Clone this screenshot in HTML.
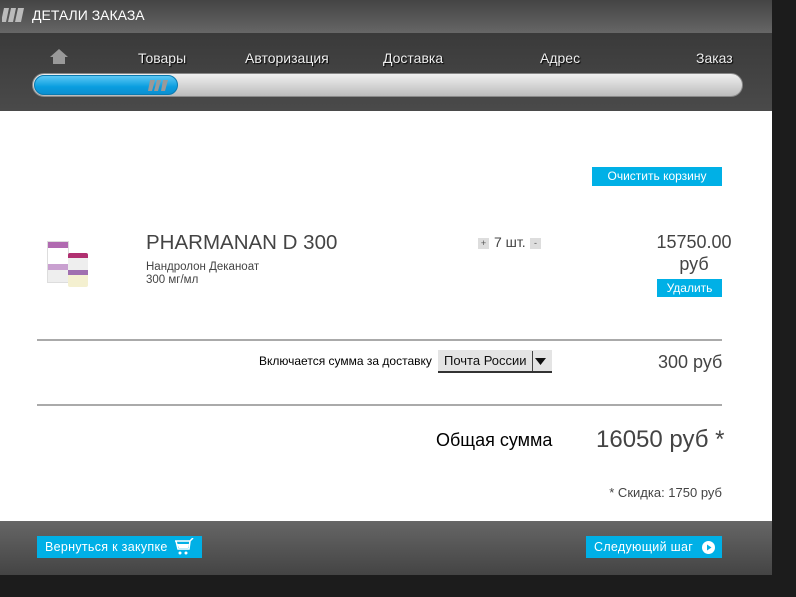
<!DOCTYPE html>
<html><head><meta charset="utf-8"><style>
*{margin:0;padding:0;box-sizing:border-box}
body{width:796px;height:597px;background:#1c1c1c;font-family:"Liberation Sans",sans-serif;position:relative;overflow:hidden}
.abs{position:absolute}
#head{left:0;top:0;width:772px;height:33px;background:linear-gradient(#444,#666)}
#nav{left:0;top:33px;width:772px;height:78px;background:linear-gradient(#3a3a3a,#4a4a4a)}
.nt{color:#eee;font-size:14px;text-shadow:1px 1px 1px #000;top:50px}
#white{left:0;top:111px;width:772px;height:410px;background:#fff}
#foot{left:0;top:521px;width:772px;height:54px;background:linear-gradient(#666,#444)}
.btn{background:#00b0e6;color:#fff;font-size:12px;text-align:center}
.g{color:#444}
</style></head><body>
<div id="head" class="abs"></div>
<svg class="abs" style="left:2px;top:8px" width="22" height="14"><path d="M2 0h5l-3 14h-5zM9 0h5l-3 14h-5zM16 0h6l-3 14h-6z" fill="#bbb"/></svg>
<div class="abs" style="left:32px;top:7px;color:#fff;font-size:14px">ДЕТАЛИ ЗАКАЗА</div>
<div id="nav" class="abs"></div>
<svg class="abs" style="left:50px;top:49px" width="18" height="15"><path d="M9 0L18 8H15V15H3V8H0Z" fill="#999"/></svg>
<div class="abs nt" style="left:138px">Товары</div>
<div class="abs nt" style="left:245px">Авторизация</div>
<div class="abs nt" style="left:383px">Доставка</div>
<div class="abs nt" style="left:540px">Адрес</div>
<div class="abs nt" style="left:696px">Заказ</div>
<div class="abs" style="left:32px;top:73px;width:711px;height:24px;border-radius:12px;background:linear-gradient(#f0f0f0,#bbb);border:1px solid #888"></div>
<div class="abs" style="left:34px;top:75px;width:144px;height:20px;border-radius:10px;background:linear-gradient(#5cc8f5,#0a9ee0 60%,#0b8fd0);border:1px solid #0a7ab0"></div>
<svg class="abs" style="left:148px;top:80px" width="20" height="11"><path d="M2 0h5l-3 11h-4zM9 0h4l-3 11h-4zM15 0h5l-3 11h-4z" fill="#999"/></svg>
<div id="white" class="abs"></div>
<div class="abs btn" style="left:592px;top:167px;width:130px;height:19px;line-height:19px">Очистить корзину</div>
<div class="abs" style="left:47px;top:241px;width:22px;height:42px;background:linear-gradient(#b06ab0 0 15%,#fff 15% 55%,#c9a0d0 55% 70%,#eee 70%);border:1px solid #ddd"></div>
<div class="abs" style="left:68px;top:253px;width:20px;height:34px;background:linear-gradient(#b03070 0 15%,#eee 15% 50%,#a070b0 50% 65%,#f4f0d0 65%);border-radius:2px"></div>
<div class="abs g" style="left:146px;top:231px;font-size:20.5px">PHARMANAN D 300</div>
<div class="abs g" style="left:146px;top:261px;font-size:11.5px;line-height:13px">Нандролон Деканоат<br>300 мг/мл</div>
<div class="abs" style="left:478px;top:238px;width:11px;height:11px;background:#ddd;font-size:9px;text-align:center;color:#555;line-height:11px">+</div>
<div class="abs g" style="left:494px;top:234px;font-size:14px">7 шт.</div>
<div class="abs" style="left:530px;top:238px;width:11px;height:11px;background:#ddd;font-size:9px;text-align:center;color:#555;line-height:11px">-</div>
<div class="abs g" style="top:231px;width:112px;text-align:center;font-size:18px;line-height:22px;left:638px">15750.00<br>руб</div>
<div class="abs btn" style="left:657px;top:279px;width:65px;height:18px;line-height:18px;font-size:12px">Удалить</div>
<div class="abs" style="left:37px;top:339px;width:685px;height:2px;background:#aaa"></div>
<div class="abs" style="left:259px;top:354px;font-size:12px;color:#000">Включается сумма за доставку</div>
<div class="abs" style="left:438px;top:350px;width:114px;height:23px;background:#e4e4e4;border-bottom:2px solid #333;font-size:13px;line-height:22px;padding-left:6px;color:#111">Почта России</div>
<div class="abs" style="left:532px;top:351px;width:1px;height:20px;background:#444"></div>
<svg class="abs" style="left:535px;top:358px" width="11" height="7"><path d="M0 0H11L5.5 7Z" fill="#111"/></svg>
<div class="abs g" style="left:658px;top:352px;font-size:18px">300 руб</div>
<div class="abs" style="left:37px;top:404px;width:685px;height:2px;background:#aaa"></div>
<div class="abs" style="left:436px;top:430px;font-size:18px;color:#000">Общая сумма</div>
<div class="abs g" style="left:596px;top:426px;font-size:24px">16050 руб *</div>
<div class="abs g" style="left:522px;width:200px;text-align:right;top:485px;font-size:13px">* Скидка: 1750 руб</div>
<div id="foot" class="abs"></div>
<div class="abs btn" style="left:37px;top:536px;width:165px;height:22px;line-height:22px;text-align:left;padding-left:8px;font-size:12.5px;letter-spacing:0.3px">Вернуться к закупке</div>
<svg class="abs" style="left:174px;top:538px" width="20" height="18"><path d="M1 3H16L19 0M2 3L4 11H15L16 3" stroke="#fff" fill="none" stroke-width="1.5"/><path d="M3 6H15L14 10H5Z" fill="#fff"/><circle cx="6" cy="15" r="1.5" fill="#fff"/><circle cx="12" cy="15" r="1.5" fill="#fff"/></svg>
<div class="abs btn" style="left:586px;top:536px;width:136px;height:22px;line-height:22px;text-align:left;padding-left:8px;font-size:12.5px;letter-spacing:0.3px">Следующий шаг</div>
<svg class="abs" style="left:702px;top:541px" width="13" height="13"><circle cx="6.5" cy="6.5" r="6.5" fill="#fff"/><path d="M5 3.5L9.5 6.5L5 9.5Z" fill="#00b0e6"/></svg>
</body></html>
